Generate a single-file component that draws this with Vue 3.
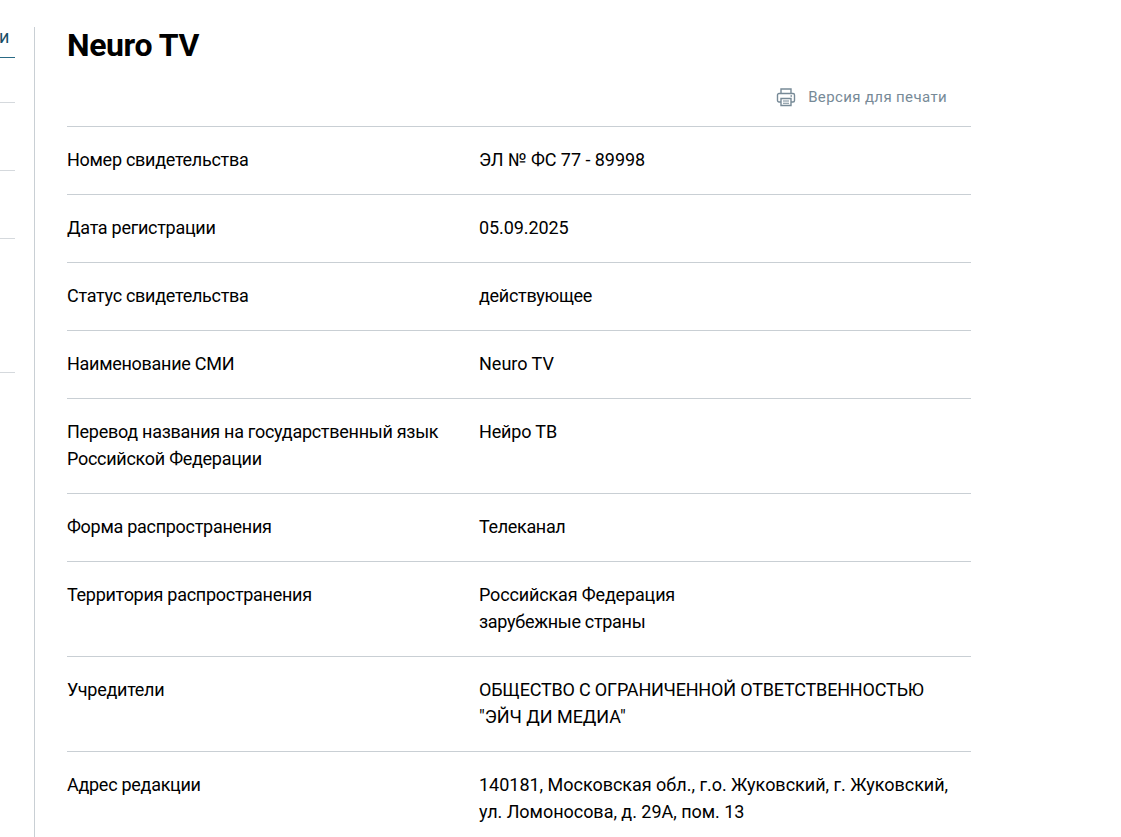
<script setup>
const line = (text, spacing) => ({ text, spacing: spacing + 'px' })
const rows = [
  { label: ['Номер свидетельства'], value: [line('ЭЛ № ФС 77 - 89998', -0.04)] },
  { label: ['Дата регистрации'], value: [line('05.09.2025', -0.08)] },
  { label: ['Статус свидетельства'], value: [line('действующее', -0.3)] },
  { label: ['Наименование СМИ'], value: [line('Neuro TV', 0)] },
  { label: ['Перевод названия на государственный язык', 'Российской Федерации'], value: [line('Нейро ТВ', -0.15)] },
  { label: ['Форма распространения'], value: [line('Телеканал', -0.34)] },
  { label: ['Территория распространения'], value: [line('Российская Федерация', -0.15), line('зарубежные страны', -0.3)] },
  { label: ['Учредители'], value: [line('ОБЩЕСТВО С ОГРАНИЧЕННОЙ ОТВЕТСТВЕННОСТЬЮ', -0.18), line('"ЭЙЧ ДИ МЕДИА"', -0.05)] },
  { label: ['Адрес редакции'], value: [line('140181, Московская обл., г.о. Жуковский, г. Жуковский,', -0.02), line('ул. Ломоносова, д. 29А, пом. 13', -0.03)] },
]
</script>

<template>
  <div class="page">
    <aside class="side">
      <div class="side-item active"><span>и</span></div>
      <div class="side-item h45"></div>
      <div class="side-item h68"></div>
      <div class="side-item h68"></div>
      <div class="side-item h134"></div>
    </aside>
    <main class="main">
      <h1 class="title">Neuro TV</h1>
      <div class="print">
        <svg class="print-icon" width="20" height="20" viewBox="0 0 20 20" fill="none" stroke="#778a97" stroke-width="1.4">
          <path d="M5 6V2h10v4" />
          <path d="M5 15H3a1.5 1.5 0 0 1-1.500-1.500V8A1.500 1.500 0 0 1 3 6.500h14A1.500 1.500 0 0 1 18.500 8v5.500A1.500 1.500 0 0 1 17 15h-2" />
          <path d="M5 11.500h10V18.500H5z" />
          <path d="M7 14h6M7 16.200h6" stroke-width="1.100" />
          <path d="M14.500 9h1.500" />
        </svg>
        <span>Версия для печати</span>
      </div>
      <div class="table">
        <div v-for="(r, i) in rows" :key="i" class="row">
          <div class="cell label">
            <div v-for="(l, j) in r.label" :key="j">{{ l }}</div>
          </div>
          <div class="cell value">
            <div v-for="(l, j) in r.value" :key="j" :style="{ letterSpacing: l.spacing }">{{ l.text }}</div>
          </div>
        </div>
      </div>
    </main>
  </div>
</template>

<style scoped>
.page {
  display: flex;
  height: 837px;
  overflow: hidden;
  padding-top: 27px;
  box-sizing: border-box;
  font-family: Roboto, "Liberation Sans", sans-serif;
  color: #000;
  background: #fff;
}
.side {
  width: 15px;
  margin-right: 19px;
  flex: none;
}
.side-item {
  box-sizing: border-box;
  border-bottom: 1px solid #d5d9dd;
}
.active {
  height: 31px;
  border-bottom-color: #2a6a85;
  font-size: 18px;
  line-height: 20px;
  color: #1a5068;
  white-space: nowrap;
  overflow: hidden;
}
.active span {
  display: block;
  margin-left: -1px;
}
.h45 { height: 45px; }
.h68 { height: 68px; }
.h134 { height: 134px; }
.main {
  flex: none;
  width: 904px;
  border-left: 1px solid #c9cfd4;
  padding-left: 32px;
}
.title {
  margin: 0;
  font-size: 32px;
  line-height: 36px;
  font-weight: 700;
  letter-spacing: -0.4px;
}
.print {
  display: flex;
  align-items: center;
  gap: 12px;
  height: 63px;
  padding: 4px 24px 0 0;
  justify-content: flex-end;
  box-sizing: border-box;
  font-size: 15px;
  letter-spacing: 0.37px;
  color: #778a97;
}
.table {
  border-top: 1px solid #c9cfd4;
}
.row {
  display: flex;
  border-bottom: 1px solid #c9cfd4;
  padding: 19px 0 21px;
  font-size: 18px;
  line-height: 27px;
}
.cell {
  white-space: nowrap;
}
.label {
  width: 412px;
  flex: none;
  letter-spacing: -0.28px;
}
</style>
